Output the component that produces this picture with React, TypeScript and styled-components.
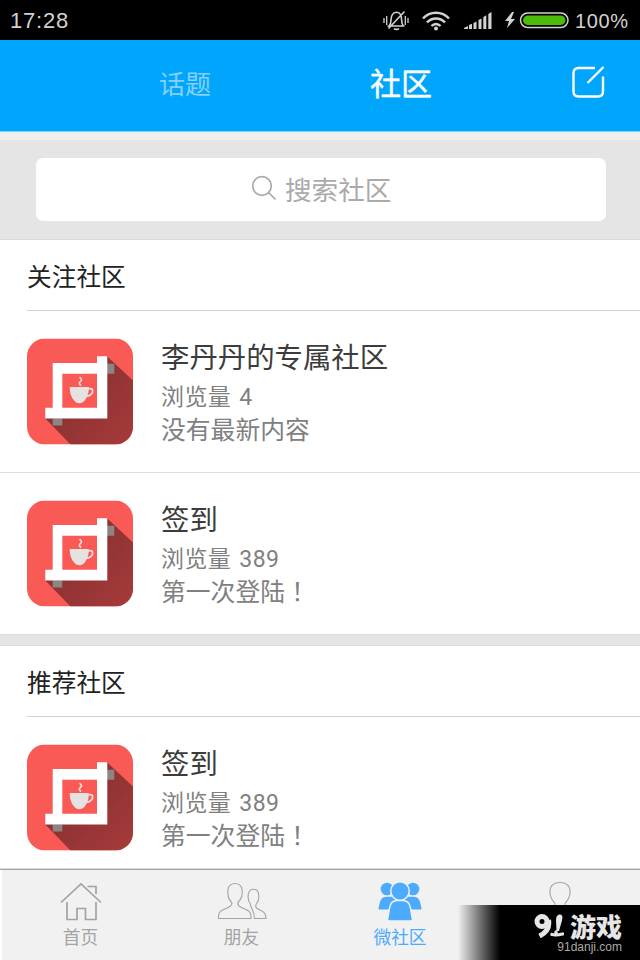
import { ReactNode } from "react";
import styled, { createGlobalStyle } from "styled-components";

const GlobalStyle = createGlobalStyle`
  * {
    box-sizing: border-box;
  }

  body {
    margin: 0;
    font-family: Roboto, "Noto Sans CJK SC", sans-serif;
  }

  svg {
    display: block;
    flex: none;
  }
`;

const Screen = styled.div`
  position: relative;
  display: flex;
  flex-direction: column;
  width: 640px;
  height: 960px;
  overflow: hidden;
  background: #fff;
`;

const StatusBar = styled.div`
  display: flex;
  flex: none;
  align-items: center;
  justify-content: space-between;
  height: 40px;
  padding: 1px 11px 0 10px;
  background: #000;
  color: #d2d2d2;
`;

const Clock = styled.span`
  font: 22px/40px "Liberation Sans", sans-serif;
  letter-spacing: 0.8px;
`;

const StatusIcons = styled.div`
  display: flex;
  align-items: center;
`;

const Spacer = styled.span<{ $size: number }>`
  width: ${(props) => props.$size}px;
`;

const Percent = styled.span`
  margin-left: 6px;
  width: 54px;
  font: 20px/38px "Liberation Sans", sans-serif;
  letter-spacing: 0.6px;
  white-space: nowrap;
`;

const Header = styled.header`
  display: flex;
  flex: none;
  align-items: center;
  height: 92px;
  padding: 0 34px 6px 159px;
  background: #00a6fc;
  border-bottom: 1px solid #7fd2fd;
`;

const HeaderTab = styled.div<{ $active?: boolean }>`
  width: ${(props) => (props.$active ? "202px" : "211px")};
  padding-top: ${(props) => (props.$active ? "4px" : "5px")};
  color: ${(props) => (props.$active ? "#fff" : "#86cffb")};
  font-size: ${(props) => (props.$active ? "31px" : "26px")};
  line-height: 40px;
  -webkit-text-stroke: ${(props) => (props.$active ? "0.4px #fff" : "0")};
`;

const SearchArea = styled.div`
  flex: none;
  height: 108px;
  padding: 18px 34px 0 36px;
  background: #e5e5e5;
  border-top: 8px solid #efefef;
  border-bottom: 1px solid #dadada;
`;

const SearchBox = styled.div`
  display: flex;
  align-items: center;
  height: 63px;
  padding: 0 0 3px 215px;
  gap: 8px;
  border-radius: 7px;
  background: #fff;
  color: #aaa;
  font-size: 26.6px;
`;

const SectionTitle = styled.h2`
  flex: none;
  height: 71px;
  margin: 0 0 0 27px;
  border-bottom: 1px solid #d2d2d2;
  color: #222;
  font-size: 24.7px;
  font-weight: 400;
  line-height: 75px;
`;

const Row = styled.div<{ $height: number }>`
  display: flex;
  flex: none;
  height: ${(props) => props.$height}px;
  padding: 27px 27px 0;
  gap: 28px;
  border-bottom: 1px solid #dedede;
`;

const RowText = styled.div`
  display: flex;
  flex-direction: column;
  padding-top: 1px;
`;

const Name = styled.div`
  height: 43px;
  color: #3c3c3c;
  font-size: 28.4px;
  line-height: 40px;
`;

const Views = styled.div`
  height: 32px;
  color: #808080;
  font-size: 23px;
  line-height: 32px;
  word-spacing: 2px;
  letter-spacing: 0.4px;
`;

const Summary = styled.div`
  height: 33px;
  color: #808080;
  font-size: 24.8px;
  line-height: 33px;

  /* The TC family centres the full-width exclamation mark */
  span {
    font-family: "Noto Sans CJK TC", sans-serif;
    line-height: 1;
  }
`;

const Gap = styled.div`
  flex: none;
  height: 11px;
  background: #e5e5e5;
  border-bottom: 1px solid #dadada;
`;

const TabBar = styled.nav`
  display: flex;
  flex: none;
  height: 91px;
  margin-top: auto;
  border-top: 1px solid #a2a2a2;
  background: linear-gradient(to right, #fff 2px, #f1f1f1 2px);
`;

const TabItem = styled.div<{ $active?: boolean; $shift?: number }>`
  display: flex;
  flex: none;
  width: 25%;
  flex-direction: column;
  align-items: center;
  padding: 11px 0 0 ${(props) => props.$shift ?? 0}px;
  gap: 4px;
  color: ${(props) => (props.$active ? "#4dabff" : "#a3a3a3")};
  font-size: 17.7px;
  line-height: 26px;
`;

const Watermark = styled.div`
  position: absolute;
  right: 0;
  bottom: 0;
  display: flex;
  flex-direction: column;
  align-items: flex-end;
  width: 182px;
  height: 55px;
  padding: 7px 18px 0 0;
  background: linear-gradient(to right, rgba(0, 0, 0, 0), #000 42px);
`;

const Brand = styled.div`
  display: flex;
  align-items: center;
  height: 27px;
  gap: 6px;
  color: #e6e6e6;
  font: 900 26px/25px "Noto Sans CJK SC", sans-serif;
`;

const Site = styled.div`
  color: #aaa;
  font: 12px/16px "Liberation Sans", sans-serif;
`;

const MuteIcon = () => (
  <svg width="26" height="22" viewBox="0 0 26 22" fill="none" stroke="#d2d2d2" strokeWidth="1.6">
    <path d="M4.500 16h17M6.500 15.500C9 12.500 7 7 9.500 4.500 11 1.500 16 1.500 17.500 4.500 19.500 7 17.500 12.500 20 15.500M11 18.500c1 1.200 4 1.200 5 0M21.500 1.500L5.500 18.500" />
    <path d="M1 8v5M3.700 6v9M22.300 6v9M25 8v5" strokeWidth="1.300" />
  </svg>
);

const WifiIcon = () => (
  <svg width="28" height="20" viewBox="0 0 28 20" fill="none" stroke="#d2d2d2" strokeWidth="2.500">
    <path d="M1 7.500C8-.2 20-.2 27 7.500M5 11.500c5-5.300 13-5.300 18 0M9.500 15c2.500-2.800 6.500-2.800 9 0" />
    <circle cx="14" cy="17.500" r="2" fill="#d2d2d2" stroke="none" />
  </svg>
);

const SignalIcon = () => (
  <svg width="28" height="17" viewBox="0 0 28 17" fill="#d2d2d2">
    <path d="M0 17v-1l4-2v3zM5 17v-4l3-1.300V17zM9.500 17v-6l3-1.500V17zM14.500 17V8l3-1.500V17zM19.300 17V5l3-1.700V17zM24.300 17V2l3.200-2v17z" />
  </svg>
);

const BatteryIcon = () => (
  <svg width="65" height="17" viewBox="0 0 65 17">
    <path d="M8 0L1 9h4l-2 7 8-9H7l3-7z" fill="#d2d2d2" />
    <rect x="16.500" y="1" width="47.500" height="14.500" rx="7.250" fill="none" stroke="#d2d2d2" strokeWidth="1.500" />
    <rect x="19" y="3.500" width="42.500" height="9.500" rx="4.750" fill="#4bbd09" />
  </svg>
);

const ComposeIcon = () => (
  <svg width="34" height="34" viewBox="0 0 34 34" fill="none" stroke="#fff" strokeWidth="2.400">
    <path d="M23 2H6.500Q1.500 2 1.500 7v18.500q0 5 5 5H26q5 0 5-5V10.500M15.500 17L31.500 1" />
  </svg>
);

const SearchIcon = () => (
  <svg width="26" height="26" viewBox="0 0 26 26" fill="none" stroke="#aaa" strokeWidth="1.700">
    <circle cx="11" cy="11" r="9.300" />
    <path d="M17.500 17.500L24.500 24.500" />
  </svg>
);

const CommunityIcon = () => (
  <svg width="106" height="107" viewBox="0 0 106 106">
    <defs>
      <linearGradient id="shade" x1="0" y1="0" x2="1" y2="1">
        <stop offset="0.400" stopColor="#8e3233" />
        <stop offset="1" stopColor="#a73a3a" />
      </linearGradient>
      <clipPath id="tile">
        <rect width="106" height="106" rx="18" />
      </clipPath>
    </defs>
    <g clipPath="url(#tile)">
      <rect width="106" height="106" fill="#fa5a55" />
      <path d="M80 17.700L106 42v64H43.500L18.300 80z" fill="url(#shade)" />
      <path d="M80 25.300h7.300v10H80zM25.700 80h9.600v7h-9.600z" fill="#8c8582" />
      <path d="M35 35h35.500v34.500H35z" fill="#fa5a55" />
    </g>
    <path
      d="M70 17.700h10.300V80h-62V69.300h7.400V24.600H70zM35.300 35.300v34H70v-34z"
      fill="#fff"
      fillRule="evenodd"
    />
    <path d="M42.700 48.600h19.200c0 8-3 13-6.500 15.500q-3 1.200-6 0C45.500 61.500 42.700 56 42.700 48.600z" fill="#e5e2e1" />
    <path d="M61.500 50.500c5-1.500 5 3 2.500 5.300-1.500 1.500-3.500 2-5 2" fill="none" stroke="#e5e2e1" strokeWidth="1.700" />
    <path d="M52.500 38.700c3 2.500 2 3.500.8 4.500s-1.500 2 .7 4" fill="none" stroke="#f3dedd" strokeWidth="1.600" />
  </svg>
);

const HomeIcon = () => (
  <svg width="42" height="40" viewBox="0 0 42 40" fill="none" stroke="#a3a3a3" strokeWidth="1.700">
    <path d="M1 21.500L21 3l20 18.500M27.500 5.500H36V13M7 21v17.500h10V27.500h8.500v11H36V21" />
  </svg>
);

const FriendsIcon = () => (
  <svg width="50" height="40" viewBox="0 0 50 40" fill="none" stroke="#a3a3a3" strokeWidth="1.100">
    <path d="M1.500 37.500H34v-2.500c0-7-8-6.500-12-10-1.500-1.500-1.500-3-.5-4.500 3.500-3 4.500-6 3.500-12-1-8-13-8-14 0-.8 6 0 9 3 12 1.500 1.500 1 3-.5 4.500-4 3.500-12 3-12 10z" />
    <path d="M37.500 37.500h11.500c0-8-6-7.500-9.500-10.500-1.200-1.500-1-3 .2-4.500 2-2.500 2.500-5 2-9-.8-7-9.500-7-10.500 0-.4 4 0 7 2.300 9.500-.8 3 4 6 4 14.500z" />
  </svg>
);

const GroupIcon = () => (
  <svg width="44" height="40" viewBox="0 0 44 40" fill="#4dabff">
    <circle cx="9" cy="8" r="6.300" />
    <circle cx="35" cy="8" r="6.300" />
    <path d="M.5 28.500C1.500 20 3 15.700 8.500 15.700h27c5.500 0 7 4.300 8 12.800z" />
    <g stroke="#f1f1f1" strokeWidth="1.500">
      <path d="M9.500 38.500L11.500 27c1-5.500 3.500-7.500 7.500-7.500h6c4 0 6.500 2 7.500 7.500l2 11.500q0 1.500-2 1.500h-21q-2 0-2-1.500z" />
      <circle cx="22" cy="10" r="9.300" />
    </g>
  </svg>
);

const ProfileIcon = () => (
  <svg width="42" height="40" viewBox="0 0 42 40" fill="none" stroke="#a3a3a3" strokeWidth="1.100">
    <path d="M2 38c0-10 14-7 14-14 0-3-2-3.500-3.500-6.500-2-4-1.500-5-1.500-7.500 0-5.500 4.500-8.500 10-8.500S31 4.500 31 10c0 2.500.5 3.500-1.500 7.500C28 20.500 26 21 26 24c0 7 14 4 14 14z" />
  </svg>
);

const NineOneLogo = () => (
  <svg width="30" height="24" viewBox="0 0 30 24" fill="none" stroke="#e6e6e6">
    <ellipse cx="8" cy="7.500" rx="5" ry="5" strokeWidth="5" />
    <path d="M14.500 6c1.500 8-2 12.500-9 16" strokeWidth="5" />
    <path d="M25.500.5q4-.5 2.500 6l-3 10.500h-2.500l-.5-11q0-5 3.500-5.500z" fill="#e6e6e6" stroke="none" />
    <path d="M18 20.500q4 1 10.500-.5M22 18v3" strokeWidth="3.300" strokeLinecap="round" />
  </svg>
);

interface CommunityProps {
  name: string;
  views: number;
  summary: ReactNode;
  height?: number;
}

const Community = ({ name, views, summary, height = 162 }: CommunityProps) => (
  <Row $height={height}>
    <CommunityIcon />
    <RowText>
      <Name>{name}</Name>
      <Views>浏览量 {views}</Views>
      <Summary>{summary}</Summary>
    </RowText>
  </Row>
);

const firstLogin = (
  <>
    第一次登陆<span>！</span>
  </>
);

const tabs: { label: string; icon: ReactNode; active?: boolean; shift?: number }[] = [
  { label: "首页", icon: <HomeIcon />, shift: 1 },
  { label: "朋友", icon: <FriendsIcon />, shift: 3 },
  { label: "微社区", icon: <GroupIcon />, active: true },
  { label: "", icon: <ProfileIcon /> },
];

export default function App() {
  return (
    <>
      <GlobalStyle />
      <Screen>
        <StatusBar>
          <Clock>17:28</Clock>
          <StatusIcons>
            <MuteIcon />
            <Spacer $size={13} />
            <WifiIcon />
            <Spacer $size={14} />
            <SignalIcon />
            <Spacer $size={12} />
            <BatteryIcon />
            <Percent>100%</Percent>
          </StatusIcons>
        </StatusBar>
        <Header>
          <HeaderTab>话题</HeaderTab>
          <HeaderTab $active>社区</HeaderTab>
          <ComposeIcon />
        </Header>
        <SearchArea>
          <SearchBox>
            <SearchIcon />
            搜索社区
          </SearchBox>
        </SearchArea>
        <SectionTitle>关注社区</SectionTitle>
        <Community name="李丹丹的专属社区" views={4} summary="没有最新内容" />
        <Community name="签到" views={389} summary={firstLogin} />
        <Gap />
        <SectionTitle>推荐社区</SectionTitle>
        <Community name="签到" views={389} summary={firstLogin} height={152} />
        <TabBar>
          {tabs.map((tab, i) => (
            <TabItem key={i} $active={tab.active} $shift={tab.shift}>
              {tab.icon}
              {tab.label}
            </TabItem>
          ))}
        </TabBar>
        <Watermark>
          <Brand>
            <NineOneLogo />
            游戏
          </Brand>
          <Site>91danji.com</Site>
        </Watermark>
      </Screen>
    </>
  );
}
